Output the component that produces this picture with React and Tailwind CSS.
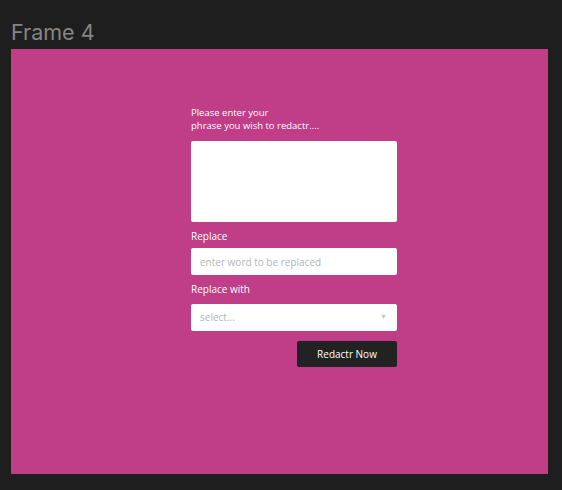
import React from 'react';

const App = () => {
  return (
    <div className="w-[562px] h-[490px] bg-[#1e1e1e] pl-[11px] pt-[19px] font-['Open_Sans',sans-serif]">
      <h1 className="text-[21.5px] leading-[26px] text-[#858585] font-['Inter',sans-serif]">Frame 4</h1>
      <div className="mt-[4px] w-[537px] h-[425px] bg-[#c03d87] pl-[180px] pt-[57px]">
        <div className="w-[206px] flex flex-col">
          <p className="text-[9.5px] leading-[13px] text-white">
            Please enter your
            <br />
            phrase you wish to redactr....
          </p>
          <textarea className="mt-[9px] h-[81px] w-full bg-white rounded-[2px] resize-none outline-none" />
          <label className="mt-[7px] text-[10px] leading-[14px] text-white">Replace</label>
          <input
            className="mt-[5px] h-[27px] w-full bg-white rounded-[2px] px-[9px] text-[10px] text-gray-700 placeholder:text-[#b5b5b5] outline-none"
            placeholder="enter word to be replaced"
          />
          <label className="mt-[7px] text-[10px] leading-[14px] text-white">Replace with</label>
          <div className="mt-[8px] h-[27px] w-full bg-white rounded-[2px] px-[9px] flex items-center justify-between">
            <span className="text-[10px] text-[#b5b5b5]">select...</span>
            <span className="text-[7px] text-[#c4c4c4] pr-[1px]">▼</span>
          </div>
          <div className="mt-[10px] flex justify-end">
            <button className="w-[100px] h-[26px] bg-[#222222] rounded-[2px] text-[10px] text-white">
              Redactr Now
            </button>
          </div>
        </div>
      </div>
    </div>
  );
};

export default App;
